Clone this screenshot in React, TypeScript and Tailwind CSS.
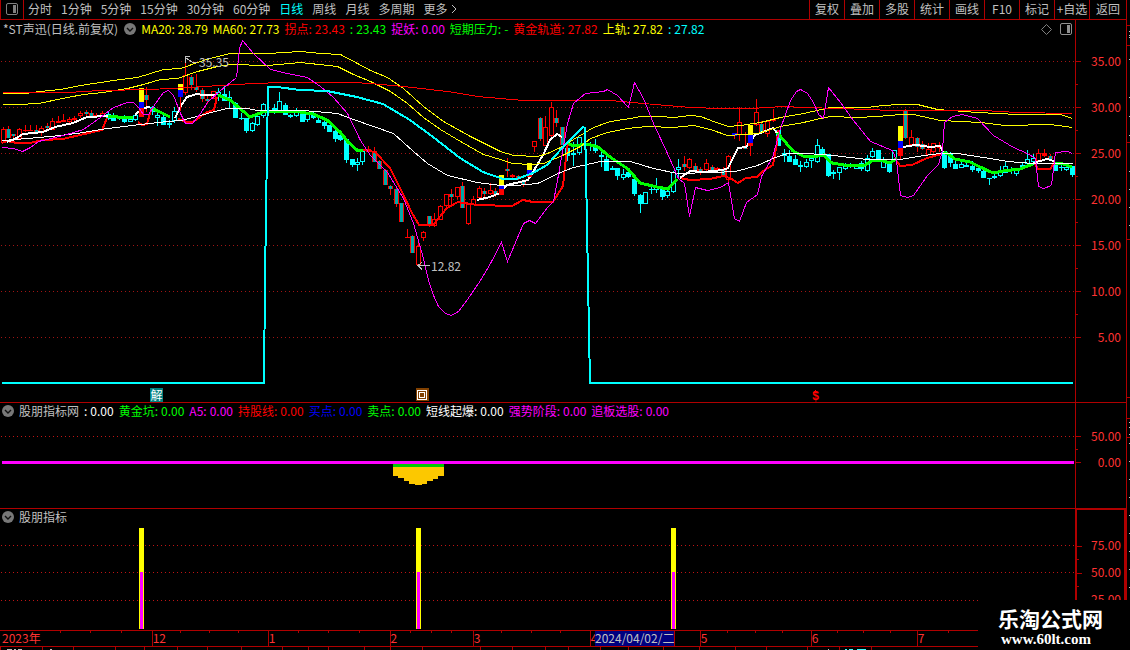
import type { ReactNode } from "react";

type CandleKind = "up" | "fade" | "solid" | "fall" | "open";

// [x, high, low, body top, body bottom, kind]
type Candle = [number, number, number, number, number, CandleKind];

// [x, yellow top, blue top, red top, red bottom, wick bottom]
type Signal = [number, number, number, number, number, number];

interface Reading {
  label: string;
  value: string;
  color: string;
}

const PERIODS = [
  "分时",
  "1分钟",
  "5分钟",
  "15分钟",
  "30分钟",
  "60分钟",
  "日线",
  "周线",
  "月线",
  "多周期",
];

const TOOLS = ["复权", "叠加", "多股", "统计", "画线", "F10", "标记", "+自选"];

const MAIN_READINGS: Reading[] = [
  { label: "MA20:", value: "28.79", color: "text-[#ffff00]" },
  { label: "MA60:", value: "27.73", color: "text-[#ffff00]" },
  { label: "拐点:", value: "23.43", color: "text-[#ff0000]" },
  { label: ":", value: "23.43", color: "text-[#00ff00]" },
  { label: "捉妖:", value: "0.00", color: "text-[#ff00ff]" },
  { label: "短期压力:", value: "-", color: "text-[#00ff00]" },
  { label: "黄金轨道:", value: "27.82", color: "text-[#ff0000]" },
  { label: "上轨:", value: "27.82", color: "text-[#ffff00]" },
  { label: ":", value: "27.82", color: "text-[#00ffff]" },
];

const SUB_READINGS: Reading[] = [
  { label: ":", value: "0.00", color: "text-white" },
  { label: "黄金坑:", value: "0.00", color: "text-[#00ff00]" },
  { label: "A5:", value: "0.00", color: "text-[#ff00ff]" },
  { label: "持股线:", value: "0.00", color: "text-[#ff0000]" },
  { label: "买点:", value: "0.00", color: "text-[#0000ff]" },
  { label: "卖点:", value: "0.00", color: "text-[#00ff00]" },
  { label: "短线起爆:", value: "0.00", color: "text-white" },
  { label: "强势阶段:", value: "0.00", color: "text-[#ff00ff]" },
  { label: "追板选股:", value: "0.00", color: "text-[#ff00ff]" },
];

const MONTHS = [
  { label: "2023年", width: 151 },
  { label: "12", width: 116 },
  { label: "1", width: 122 },
  { label: "2", width: 83 },
  { label: "3", width: 117 },
  { label: "4", width: 110 },
  { label: "5", width: 111 },
  { label: "6", width: 106 },
  { label: "7", width: 60 },
];

const WEEK_TICKS = [
  60, 90, 121, 180, 209, 238, 298, 328, 359, 410, 431, 451, 501, 531, 560, 727,
  755, 782, 837, 863, 890, 948,
];

const FOOTER_TICKS = [
  0, 42, 73, 115, 144, 177, 207, 241, 282, 308, 328, 364, 390, 422, 480, 512,
  545, 568, 600, 628, 663, 699, 735, 766, 807, 839, 871,
];

const THIN_LINES = [
  {
    color: "#ffff00",
    points:
      "2,93 25,93 39,91 60,89 80,85 100,82 120,79 137,77 150,73 163,69 180,68 200,61 213,57 230,53 267,53 300,51 320,53 340,54 357,63 370,70 387,77 403,88 423,106 443,121 470,136 490,146 500,151 513,155 537,156 547,153 560,147 573,139 593,127 610,121 630,118 640,116 660,116 673,117 690,115 700,116 713,121 728,126 740,125 760,122 780,117 803,113 830,107 867,107 882,105 900,104 917,104 937,109 977,112 1017,114 1060,114 1072,118",
  },
  {
    color: "#ffff00",
    points:
      "2,104 18,104 38,103 67,97 83,94 103,92 127,88 143,84 160,79 177,78 197,71 217,66 230,64 267,65 300,62 337,66 353,74 370,81 390,91 407,103 423,117 440,129 460,141 483,154 500,159 512,163 530,164 543,163 560,156 580,146 590,138 607,132 627,128 647,126 673,127 693,125 710,129 727,135 757,133 767,130 780,126 803,122 820,118 830,116 857,117 877,116 900,114 913,114 940,120 980,122 1005,125 1050,124 1072,127",
  },
  {
    color: "#ff0000",
    points:
      "2,92 67,92 100,90 150,89 187,87 220,85 253,83 283,82 353,82 370,83 403,86 447,91 477,96 523,100 610,100 643,103 690,107 720,108 750,108 783,106 803,107 840,108 893,110 983,110 1017,112 1072,113",
  },
  {
    color: "#ffffff",
    points:
      "2,140 27,138 60,135 83,132 107,128 140,124 167,121 180,120 197,116 210,112 227,108 247,108 257,110 303,110 337,113 353,119 373,126 393,133 413,151 427,163 447,175 477,182 500,185 515,185 537,183 560,172 573,167 600,161 630,161 653,168 677,173 713,172 735,171 757,165 775,157 787,153 807,153 833,155 867,159 900,159 923,155 940,153 957,153 983,157 1007,161 1033,163 1072,163",
  },
  {
    color: "#ff00ff",
    points:
      "2,147 13,148 22,151 30,147 38,141 63,135 83,129 100,117 113,107 127,102 133,102 138,107 143,114 148,114 155,103 163,92 168,90 173,95 180,113 185,123 192,123 200,113 207,102 220,90 230,82 236,77 239,48 242,40 253,53 270,69 287,73 307,77 320,86 333,97 347,113 360,140 370,155 387,172 403,198 413,223 423,258 428,280 433,295 438,306 445,313 451,315 458,311 467,299 480,280 490,263 501,242 507,261 523,223 529,220 535,223 547,207 553,201 557,180 561,157 567,123 573,103 585,93 603,91 607,89 617,95 628,107 634,82 643,98 653,123 667,153 678,178 684,183 689,216 695,187 707,190 720,187 728,182 734,218 739,221 746,202 757,194 761,176 772,157 780,128 790,100 796,91 800,89 807,93 813,102 818,114 823,118 828,87 840,102 853,120 870,141 892,150 896,160 900,195 907,197 913,195 927,175 938,164 942,150 944,122 952,116 962,114 977,118 993,135 1013,147 1027,153 1035,158 1038,186 1043,188 1051,185 1055,152 1067,151 1072,153",
  },
];

const RED_SUPPORT = [
  "2,143 7,141 17,143 30,143 43,140 63,139 80,135 102,130 107,118",
  "138,122 142,125 147,124 150,113 152,108",
  "178,119 187,122 193,122 207,112 214,110 217,97",
  "363,150 375,152 390,168 402,192 412,213 419,225 433,225 447,208 458,202 477,205 512,206 523,200 533,202 553,202 563,186 566,157 568,143",
  "680,178 690,180 710,179 723,176 730,178 738,183 746,178 757,177 763,171 773,165 777,143 778,130",
  "897,161 900,166 912,165 927,158 942,154",
  "1035,164 1038,169 1050,169 1055,162",
];

const WHITE_TREND = [
  "7,142 15,139 23,134 43,132 55,127 73,123 87,117 108,116",
  "135,115 143,108 150,107",
  "175,118 182,104 187,97 197,94 203,95 215,95",
  "477,200 490,197 500,193 507,185 520,182 528,180 533,172 543,155 550,140 557,134 562,137",
  "680,178 690,171 703,172 723,170 728,168 738,148 746,147 755,135 763,132 773,128 777,133",
  "902,148 907,146 917,145 930,147 940,146 943,152",
  "1033,163 1040,161 1047,159 1054,161",
];

const GREEN_TREND = [
  "108,116 127,118 133,117",
  "153,109 160,112 170,117",
  "218,95 230,100 250,117 263,112 280,111 293,111 313,114 327,120 340,132 348,142 357,150 363,150",
  "568,143 573,146 587,144 598,147 610,157 628,169 640,183 657,187 668,189 677,179",
  "777,132 780,136 793,151 803,156 813,157 823,155 832,163 850,166 865,165 872,161 880,160 890,163 897,158",
  "943,152 948,154 955,159 970,162 980,167 993,173 1003,171 1020,169 1033,164",
  "1055,163 1063,164 1072,167",
];

const GOLDEN_TRACK =
  "2,383 264,383 265,280 267,147 268,87 277,87 300,90 327,91 357,97 383,104 410,120 433,137 460,158 483,172 503,179 517,179 533,173 547,165 563,147 583,127 585,128 586,170 588,280 590,383 1073,383";

const CANDLES: Candle[] = [
  [3, 127, 143, 129, 143, "up"],
  [8, 126, 138, 129, 138, "fade"],
  [13, 134, 141, 134, 136, "fade"],
  [19, 128, 140, 129, 139, "up"],
  [25, 125, 132, 130, 131, "solid"],
  [30, 125, 131, 130, 131, "solid"],
  [36, 125, 133, 130, 133, "fade"],
  [41, 126, 136, 128, 132, "up"],
  [47, 123, 129, 126, 128, "fade"],
  [52, 118, 130, 121, 130, "up"],
  [58, 116, 123, 121, 123, "solid"],
  [63, 114, 122, 120, 122, "solid"],
  [69, 117, 124, 119, 122, "up"],
  [74, 116, 121, 118, 120, "solid"],
  [80, 111, 118, 113, 116, "up"],
  [86, 110, 116, 112, 114, "fade"],
  [91, 110, 117, 113, 116, "fade"],
  [96, 113, 117, 115, 116, "solid"],
  [102, 111, 117, 113, 116, "up"],
  [108, 111, 120, 114, 119, "fall"],
  [113, 113, 121, 118, 121, "fall"],
  [119, 117, 120, 118, 119, "fall"],
  [124, 115, 123, 117, 122, "fall"],
  [130, 119, 122, 119, 122, "open"],
  [135, 113, 121, 115, 120, "open"],
  [146, 87, 112, 95, 100, "fade"],
  [152, 106, 115, 107, 112, "fall"],
  [157, 113, 126, 115, 118, "open"],
  [163, 115, 125, 117, 125, "fall"],
  [169, 120, 128, 123, 125, "fall"],
  [174, 107, 123, 111, 121, "open"],
  [185, 60, 95, 75, 93, "up"],
  [191, 75, 90, 77, 85, "fade"],
  [196, 74, 92, 87, 90, "fade"],
  [202, 88, 102, 90, 99, "fade"],
  [207, 96, 104, 99, 101, "fade"],
  [213, 91, 99, 91, 99, "up"],
  [218, 88, 101, 92, 95, "open"],
  [224, 85, 101, 94, 101, "fall"],
  [229, 91, 109, 97, 101, "open"],
  [235, 102, 118, 103, 118, "fall"],
  [241, 113, 120, 118, 119, "fall"],
  [246, 118, 133, 118, 131, "fall"],
  [252, 122, 132, 123, 131, "open"],
  [257, 115, 126, 116, 125, "open"],
  [263, 103, 118, 104, 116, "open"],
  [274, 104, 114, 108, 113, "fall"],
  [279, 92, 113, 101, 112, "open"],
  [285, 103, 115, 105, 115, "fall"],
  [290, 114, 118, 115, 117, "fall"],
  [296, 108, 117, 112, 116, "open"],
  [302, 113, 122, 114, 122, "fall"],
  [307, 112, 122, 113, 120, "open"],
  [313, 112, 119, 114, 118, "fall"],
  [318, 117, 123, 120, 123, "fall"],
  [324, 120, 129, 122, 126, "fall"],
  [329, 125, 132, 125, 132, "fall"],
  [335, 128, 142, 131, 139, "fall"],
  [340, 135, 141, 135, 140, "fall"],
  [346, 139, 163, 139, 160, "fall"],
  [352, 159, 167, 159, 165, "fall"],
  [357, 158, 171, 162, 165, "open"],
  [362, 149, 165, 151, 162, "open"],
  [368, 146, 151, 149, 150, "solid"],
  [374, 147, 162, 151, 162, "fade"],
  [379, 160, 169, 161, 169, "fade"],
  [385, 169, 185, 170, 185, "fade"],
  [390, 185, 195, 186, 189, "fade"],
  [396, 187, 207, 189, 204, "fade"],
  [401, 203, 222, 203, 222, "fade"],
  [407, 229, 238, 237, 238, "solid"],
  [412, 235, 253, 236, 253, "fade"],
  [418, 241, 266, 246, 265, "up"],
  [423, 231, 241, 232, 238, "up"],
  [429, 216, 227, 216, 225, "fade"],
  [434, 213, 227, 219, 226, "up"],
  [440, 205, 220, 206, 220, "up"],
  [446, 194, 207, 194, 206, "up"],
  [451, 189, 206, 194, 197, "fade"],
  [457, 187, 199, 187, 197, "up"],
  [462, 182, 208, 186, 208, "fade"],
  [468, 203, 225, 203, 224, "up"],
  [473, 196, 205, 199, 205, "up"],
  [479, 186, 199, 188, 198, "up"],
  [484, 188, 198, 191, 194, "fade"],
  [490, 183, 195, 190, 194, "up"],
  [495, 188, 197, 191, 195, "fade"],
  [507, 158, 177, 169, 171, "fade"],
  [512, 174, 178, 175, 177, "solid"],
  [518, 175, 180, 176, 179, "fade"],
  [523, 180, 187, 181, 184, "fade"],
  [534, 141, 152, 141, 147, "up"],
  [540, 117, 141, 118, 139, "fade"],
  [545, 116, 146, 127, 146, "up"],
  [551, 102, 138, 107, 136, "up"],
  [556, 110, 127, 118, 123, "fade"],
  [562, 127, 145, 127, 145, "fade"],
  [567, 144, 161, 148, 156, "fall"],
  [573, 142, 166, 153, 155, "open"],
  [579, 137, 155, 137, 153, "open"],
  [590, 142, 151, 144, 146, "fall"],
  [595, 139, 153, 145, 151, "fall"],
  [601, 152, 167, 155, 157, "fall"],
  [606, 156, 171, 159, 171, "fall"],
  [612, 166, 170, 168, 170, "fall"],
  [617, 168, 180, 168, 176, "fall"],
  [623, 169, 180, 174, 178, "open"],
  [628, 170, 178, 172, 177, "fall"],
  [634, 179, 196, 179, 194, "fall"],
  [640, 194, 213, 195, 204, "fall"],
  [645, 192, 204, 192, 204, "open"],
  [651, 185, 194, 189, 190, "fall"],
  [656, 178, 193, 186, 190, "open"],
  [662, 188, 200, 188, 197, "fall"],
  [667, 189, 198, 191, 196, "open"],
  [673, 171, 193, 172, 192, "open"],
  [678, 159, 178, 167, 170, "open"],
  [684, 156, 171, 164, 167, "fade"],
  [689, 158, 169, 159, 168, "up"],
  [695, 163, 173, 166, 172, "fade"],
  [700, 167, 175, 169, 172, "fade"],
  [706, 159, 172, 163, 170, "up"],
  [712, 165, 172, 167, 171, "fade"],
  [717, 167, 171, 168, 170, "up"],
  [723, 167, 177, 169, 177, "fade"],
  [728, 155, 186, 156, 180, "up"],
  [739, 107, 141, 122, 135, "up"],
  [745, 132, 149, 148, 149, "fade"],
  [756, 99, 126, 112, 125, "up"],
  [761, 121, 133, 124, 133, "fade"],
  [767, 120, 137, 121, 134, "up"],
  [773, 109, 122, 119, 121, "solid"],
  [778, 130, 146, 130, 146, "fall"],
  [784, 149, 162, 153, 156, "fall"],
  [789, 150, 162, 156, 162, "fall"],
  [795, 155, 165, 159, 165, "fall"],
  [800, 161, 172, 165, 167, "open"],
  [806, 159, 168, 162, 167, "open"],
  [811, 155, 168, 158, 161, "open"],
  [817, 139, 163, 145, 162, "open"],
  [822, 147, 156, 149, 154, "fall"],
  [828, 154, 177, 154, 176, "fall"],
  [833, 170, 179, 172, 174, "fall"],
  [839, 167, 180, 167, 173, "open"],
  [845, 163, 170, 166, 169, "open"],
  [850, 163, 168, 165, 166, "fall"],
  [856, 164, 169, 166, 169, "open"],
  [861, 161, 171, 163, 169, "fall"],
  [867, 155, 172, 158, 171, "open"],
  [872, 148, 158, 151, 157, "open"],
  [878, 150, 162, 150, 160, "fall"],
  [883, 157, 168, 160, 168, "open"],
  [889, 161, 173, 162, 172, "fall"],
  [894, 150, 161, 150, 160, "open"],
  [905, 109, 139, 110, 138, "fade"],
  [911, 130, 147, 137, 145, "up"],
  [917, 137, 152, 138, 147, "fade"],
  [922, 141, 150, 144, 149, "fade"],
  [928, 143, 155, 149, 155, "up"],
  [933, 143, 153, 143, 152, "up"],
  [939, 142, 152, 146, 148, "solid"],
  [944, 151, 169, 151, 168, "fall"],
  [950, 152, 167, 154, 163, "fall"],
  [955, 158, 169, 164, 169, "fall"],
  [961, 160, 168, 164, 168, "open"],
  [966, 160, 167, 165, 167, "open"],
  [972, 161, 172, 166, 170, "fall"],
  [978, 167, 173, 168, 171, "fall"],
  [983, 169, 178, 171, 178, "fall"],
  [989, 178, 185, 178, 179, "fall"],
  [994, 174, 179, 176, 178, "open"],
  [1000, 166, 177, 171, 176, "open"],
  [1005, 162, 173, 166, 173, "open"],
  [1011, 167, 174, 169, 171, "fall"],
  [1016, 168, 176, 169, 174, "open"],
  [1022, 163, 170, 165, 167, "open"],
  [1027, 150, 166, 159, 164, "open"],
  [1033, 154, 165, 158, 162, "open"],
  [1038, 149, 162, 153, 161, "up"],
  [1044, 149, 157, 153, 156, "solid"],
  [1050, 154, 160, 156, 159, "fade"],
  [1055, 162, 171, 163, 171, "fall"],
  [1061, 165, 171, 167, 168, "fall"],
  [1066, 165, 171, 167, 170, "open"],
  [1072, 166, 177, 166, 175, "fall"],
];

const SIGNALS: Signal[] = [
  [141, 88, 102, 108, 117, 117],
  [180, 84, 90, 97, 97, 111],
  [501, 175, 186, 189, 195, 195],
  [529, 163, 170, 174, 177, 177],
  [734, 133, 133, 136, 136, 139],
  [750, 125, 135, 143, 146, 156],
  [900, 126, 141, 148, 156, 159],
];

const PIT_BARS = [
  [393, 5, 476],
  [398, 6, 478],
  [404, 5, 481],
  [409, 6, 484],
  [415, 7, 485],
  [422, 5, 484],
  [427, 6, 481],
  [433, 5, 479],
  [438, 6, 476],
];

const SIGNAL_BARS = [139, 416, 671];

function PanelIcon({ className }: { className: string }) {
  return (
    <svg className={className} width="12" height="12" viewBox="0 0 12 12" fill="none">
      <rect x="0.5" y="0.5" width="11" height="11" rx="1.5" stroke="currentColor" />
      <rect x="7" y="2" width="3" height="8" fill="currentColor" />
    </svg>
  );
}

function CollapseButton({ label }: { label: string }) {
  return (
    <button type="button" aria-label={label} className="shrink-0">
      <svg width="12" height="12" viewBox="0 0 12 12" fill="none">
        <circle cx="6" cy="6" r="6" fill="#787878" />
        <path d="M3 5l3 3 3-3" stroke="#101010" strokeWidth="1.4" />
      </svg>
    </button>
  );
}

function Readings({ items }: { items: Reading[] }) {
  return (
    <>
      {items.map((item, index) => (
        <span key={index} className={`flex gap-[3px] ${item.color}`}>
          <span>{item.label}</span>
          <span>{item.value}</span>
        </span>
      ))}
    </>
  );
}

function GridLine({ y, color = "#a01414" }: { y: number; color?: string }) {
  return (
    <line
      x1="1"
      x2="1074"
      y1={y + 0.5}
      y2={y + 0.5}
      stroke={color}
      strokeDasharray="1 3"
    />
  );
}

function CandleMark({ candle }: { candle: Candle }) {
  const [x, high, low, top, bottom, kind] = candle;
  const rising = kind === "up" || kind === "fade" || kind === "solid";
  const color = rising ? "#ff0000" : "#00ffff";
  const height = bottom - top;

  return (
    <g>
      <rect x={x} y={high} width="1" height={low - high} fill={color} />
      <rect x={x - 2} y={top} width="5" height={height} fill={color} />
      {kind === "fade" && (
        <rect x={x - 1} y={top} width="3" height={height} fill="#00a8a8" />
      )}
      {(kind === "up" || kind === "open") && height > 2 && (
        <rect x={x - 1} y={top + 1} width="3" height={height - 2} fill="#000000" />
      )}
    </g>
  );
}

function SignalMark({ signal }: { signal: Signal }) {
  const [x, yellow, blue, red, bottom, wick] = signal;

  return (
    <g>
      <rect x={x} y={yellow} width="1" height={wick - yellow} fill="#ff0000" />
      <rect x={x - 2} y={yellow} width="5" height={blue - yellow} fill="#ffff00" />
      <rect x={x - 2} y={blue} width="5" height={red - blue} fill="#0000ff" />
      <rect x={x - 2} y={red} width="5" height={bottom - red} fill="#ff0000" />
    </g>
  );
}

function ThickLines({ lines, color, width }: { lines: string[]; color: string; width: number }) {
  return (
    <>
      {lines.map((points) => (
        <polyline key={points} points={points} stroke={color} strokeWidth={width} fill="none" />
      ))}
    </>
  );
}

function PriceChart() {
  return (
    <svg
      className="block h-[364px] w-full"
      viewBox="0 38 1075 364"
      preserveAspectRatio="none"
      shapeRendering="crispEdges"
    >
      {[61, 107, 153, 199, 245, 291, 337].map((y) => (
        <GridLine key={y} y={y} />
      ))}

      {CANDLES.map((candle) => (
        <CandleMark key={candle[0]} candle={candle} />
      ))}

      <ThickLines lines={RED_SUPPORT} color="#ff0000" width={2} />
      <ThickLines lines={GREEN_TREND} color="#00ff00" width={3} />
      <ThickLines lines={WHITE_TREND} color="#ffffff" width={2} />

      {SIGNALS.map((signal) => (
        <SignalMark key={signal[0]} signal={signal} />
      ))}

      <g transform="translate(0.5 0.5)">
        {THIN_LINES.map((line) => (
          <polyline key={line.points} points={line.points} stroke={line.color} fill="none" />
        ))}
      </g>

      <polyline points={GOLDEN_TRACK} stroke="#00ffff" strokeWidth="2" fill="none" />

      {/* high and low pointers */}
      <path d="M197 62.5h-4l-8-5m0 5v-6h5" stroke="#c0c0c0" fill="none" />
      <path d="M430 265.5h-12m4-3l-4 3 4 4" stroke="#c0c0c0" fill="none" />

      {/* event markers */}
      <rect x="416" y="388" width="13" height="13" fill="#804000" />
      <rect x="417.5" y="390.5" width="9" height="9" stroke="#ffffff" fill="none" />
      <rect x="419.5" y="392.5" width="5" height="5" stroke="#ffffff" fill="none" />
      <path d="M815.5 390l3 3h-6z" fill="#ff0000" />
    </svg>
  );
}

function ScaleColumn({
  labels,
  className,
  rowClass,
}: {
  labels: string[];
  className: string;
  rowClass: string;
}) {
  return (
    <div className={`flex w-[51px] shrink-0 flex-col overflow-hidden border-[#b00000] ${className}`}>
      {labels.map((label, index) => (
        <div key={label}>
          <div className={`flex items-center justify-between ${rowClass}`}>
            <span className="h-px w-[5px] bg-[#b00000]" />
            <span className="pb-[2px] text-[#ff3232]">{label}</span>
          </div>
          <div className={`h-px w-[2px] ${index < labels.length - 1 ? "bg-[#b00000]" : ""}`} />
        </div>
      ))}
    </div>
  );
}

function Panel({ children, scale }: { children: ReactNode; scale: ReactNode }) {
  return (
    <section className="flex border-b border-[#b00000]">
      <div className="relative min-w-0 flex-1">{children}</div>
      {scale}
    </section>
  );
}

function Toolbar() {
  return (
    <header className="flex h-[20px] items-stretch border-b border-[#b00000]">
      <button
        type="button"
        aria-label="侧栏"
        className="flex w-[24px] shrink-0 items-center justify-center border-x border-[#b00000] pb-[2px]"
      >
        <PanelIcon className="text-[#808080]" />
      </button>

      <nav className="flex flex-1 items-center gap-[9px] overflow-hidden pb-[2px] pl-1">
        {PERIODS.map((period) => (
          <button
            key={period}
            type="button"
            className={period === "日线" ? "text-[#00ffff]" : ""}
          >
            {period}
          </button>
        ))}
        <button type="button" className="flex items-center gap-1">
          更多
          <svg width="6" height="10" viewBox="0 0 6 10" fill="none">
            <path d="M1 1l4 4-4 4" stroke="currentColor" />
          </svg>
        </button>
      </nav>

      {TOOLS.map((tool) => (
        <button
          key={tool}
          type="button"
          className="w-[35px] shrink-0 border-l border-[#b00000] pb-[2px]"
        >
          {tool}
        </button>
      ))}
      <button type="button" className="w-[37px] shrink-0 border-l border-[#b00000] pb-[2px]">
        返回
      </button>
    </header>
  );
}

function TimeAxis() {
  return (
    <div className="relative flex h-[16px] border-b border-[#b00000] leading-[14px] text-[#ff3232]">
      {MONTHS.map((month, index) => (
        <div
          key={month.label}
          style={{ flexGrow: month.width }}
          className={`min-w-0 basis-0 ${index > 0 ? "border-l border-[#b00000]" : "pl-[2px]"}`}
        >
          {month.label}
        </div>
      ))}
      <div style={{ flexGrow: 150 }} className="basis-0" />
      <svg
        className="absolute inset-x-0 top-0 h-[2px] w-full"
        viewBox="0 0 1126 2"
        preserveAspectRatio="none"
        shapeRendering="crispEdges"
      >
        {WEEK_TICKS.map((x) => (
          <rect key={x} x={x} y="0" width="1" height="2" fill="#b00000" />
        ))}
      </svg>
      <time
        dateTime="2024-04-02"
        className="absolute left-[595px] top-0 h-[15px] border-r border-[#b00000] bg-[#000080] whitespace-nowrap text-[#c0c0c0]"
      >
        2024/04/02/二
      </time>
    </div>
  );
}

function FooterStrip() {
  return (
    <svg
      className="block h-[3px] w-full"
      viewBox="0 0 1126 3"
      preserveAspectRatio="none"
      shapeRendering="crispEdges"
    >
      {FOOTER_TICKS.map((x) => (
        <rect key={x} x={x} y="0" width="1" height="3" fill="#b00000" />
      ))}
      <path d="M7 2.5h5m2 0h2m2 0h4m28 0h2M828 2.5h1" stroke="#c0c0c0" />
      <path d="M845 2.5h2m2 0h4m4 0h9" stroke="#40ffff" />
    </svg>
  );
}

function EdgeStrip() {
  return (
    <div className="w-[4px] shrink-0 border-l border-[#b00000]">
      <svg width="3" height="600" viewBox="0 0 3 600" shapeRendering="crispEdges">
        {[25, 45, 142, 239, 397, 418, 437].map((y) => (
          <rect key={y} x="0" y={y} width="3" height="1" fill="#b00000" />
        ))}
        {[31, 35, 37, 59, 97, 116, 135, 171, 189, 207, 225, 422, 427, 434, 443, 461, 479, 497, 515, 533, 551, 569, 587].map(
          (y) => (
            <rect key={y} x="2" y={y} width="1" height="1" fill="#c0c0c0" />
          )
        )}
      </svg>
    </div>
  );
}

export default function App() {
  return (
    <div className="relative flex min-h-screen overflow-hidden bg-black font-['Noto_Sans_CJK_SC',sans-serif] text-[12px] leading-[16px] text-[#c0c0c0]">
      <main className="min-w-0 flex-1">
        <Toolbar />

        <Panel
          scale={
            <ScaleColumn
              labels={["35.00", "30.00", "25.00", "20.00", "15.00", "10.00", "5.00"]}
              className="border-l pt-[19px] pr-[5px]"
              rowClass="h-[45px]"
            />
          }
        >
          <div className="flex h-[18px] items-center gap-[5px] whitespace-nowrap px-[3px]">
            <span className="pr-px">*ST声迅(日线.前复权)</span>
            <CollapseButton label="收起主图" />
            <Readings items={MAIN_READINGS} />
            <div className="ml-auto flex items-center gap-2">
              <svg width="11" height="11" viewBox="0 0 11 11" fill="none">
                <path d="M5.5 0.5l5 5-5 5-5-5z" stroke="#808080" />
              </svg>
              <PanelIcon className="text-[#909090]" />
            </div>
          </div>
          <PriceChart />
          <span className="absolute left-[199px] top-[34px]">35.35</span>
          <span className="absolute left-[431px] top-[238px]">12.82</span>
          <span className="absolute left-[150px] top-[368px] w-[13px] bg-[#008080] text-center leading-[14px] text-white">
            解
          </span>
          <span className="absolute left-[812px] top-[370px] font-['Liberation_Mono',monospace] text-[12px] leading-[14px] font-bold text-[#ff0000]">
            $
          </span>
        </Panel>

        <Panel
          scale={
            <ScaleColumn
              labels={["50.00", "0.00"]}
              className="border-l pt-[21px] pr-[5px]"
              rowClass="h-[25px]"
            />
          }
        >
          <div className="flex h-[17px] items-center gap-[5px] whitespace-nowrap pb-[2px] pl-[2px]">
            <CollapseButton label="收起副图一" />
            <span>股朋指标网</span>
            <Readings items={SUB_READINGS} />
          </div>
          <svg
            className="block h-[88px] w-full"
            viewBox="0 420 1075 88"
            preserveAspectRatio="none"
            shapeRendering="crispEdges"
          >
            <GridLine y={436} color="#c01414" />
            {PIT_BARS.map(([x, width, bottom]) => (
              <rect key={x} x={x} y="464" width={width} height={bottom - 464} fill="#fcc800" />
            ))}
            <rect x="393" y="464" width="51" height="3" fill="#00c800" />
            <rect x="2" y="461" width="1072" height="3" fill="#ff00ff" />
          </svg>
        </Panel>

        <Panel
          scale={
            <ScaleColumn
              labels={["75.00", "50.00", "25.00"]}
              className="border-x-2 border-t pt-[23px] pr-[3px]"
              rowClass="h-[26px]"
            />
          }
        >
          <div className="flex h-[17px] items-center gap-[5px] pb-[2px] pl-[2px]">
            <CollapseButton label="收起副图二" />
            <span>股朋指标</span>
          </div>
          <svg
            className="block h-[104px] w-full"
            viewBox="0 526 1075 104"
            preserveAspectRatio="none"
            shapeRendering="crispEdges"
          >
            {[545, 572, 600].map((y) => (
              <GridLine key={y} y={y} color="#c01414" />
            ))}
            {SIGNAL_BARS.map((x) => (
              <g key={x}>
                <rect x={x} y="528" width="5" height="101" fill="#ffff00" />
                <rect x={x + 1} y="572" width="3" height="57" fill="#ff00ff" />
              </g>
            ))}
          </svg>
        </Panel>

        <TimeAxis />
        <FooterStrip />
      </main>

      <EdgeStrip />

      <a
        href="#"
        className="absolute right-0 bottom-0 flex h-[50px] w-[152px] flex-col bg-black pl-[20px] text-white"
      >
        <span className="mt-[6px] text-[21px] leading-[24px] font-bold">乐淘公式网</span>
        <span className="pl-[3px] font-['Liberation_Serif',serif] text-[15px] leading-[18px] font-bold">
          www.60lt.com
        </span>
      </a>
    </div>
  );
}
